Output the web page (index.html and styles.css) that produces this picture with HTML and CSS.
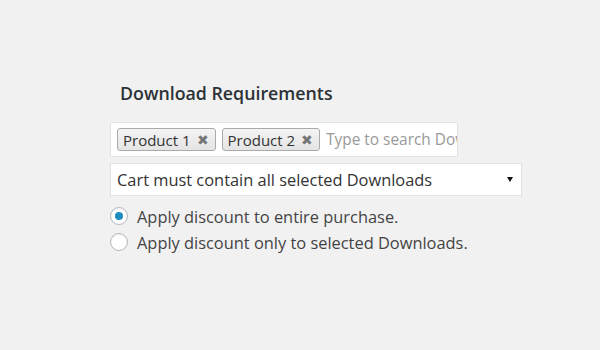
FILE: index.html
```html
<!DOCTYPE html>
<html lang="en">
<head>
  <meta charset="UTF-8" />
  <title>Download Requirements</title>
  <link rel="stylesheet" href="styles.css">
</head>
<body>
  <main class="panel">
    <h2 class="title">Download Requirements</h2>

    <div class="chosen">
      <span class="tag">Product 1 <span class="tag-x">&#x2716;</span></span>
      <span class="tag">Product 2 <span class="tag-x">&#x2716;</span></span>
      <span class="search">Type to search Dow</span>
    </div>

    <div class="select">
      <span>Cart must contain all selected Downloads</span>
      <span class="arrow"></span>
    </div>

    <div class="options">
      <label class="option">
        <span class="radio checked"></span>
        Apply discount to entire purchase.
      </label>
      <label class="option">
        <span class="radio"></span>
        Apply discount only to selected Downloads.
      </label>
    </div>
  </main>
</body>
</html>
```

FILE: styles.css
```css
body {
  margin: 0;
  background-color: #f1f1f1;
  font-family: 'Open Sans', sans-serif;
  color: #333;
}

.panel {
  display: flex;
  flex-direction: column;
  align-items: flex-start;
  padding: 81px 0 0 110px;
}

.title {
  margin: 0 0 17px;
  padding-left: 10px;
  font-size: 17.8px;
  font-weight: 600;
  line-height: 24px;
  color: #2c3136;
}

.chosen {
  box-sizing: border-box;
  width: 348px;
  height: 35px;
  display: flex;
  align-items: center;
  gap: 6px;
  padding: 0 6px;
  background-color: #fff;
  border: 1px solid #e2e2e2;
  border-radius: 2px;
  overflow: hidden;
  white-space: nowrap;
}

.tag {
  box-sizing: border-box;
  height: 23px;
  display: flex;
  align-items: center;
  gap: 6px;
  padding: 0 6px 0 5px;
  font-size: 15px;
  color: #333;
  background: linear-gradient(#f4f4f4, #e4e4e4);
  border: 1px solid #aaa;
  border-radius: 3px;
}

.tag-x {
  font-size: 14px;
  color: #777;
}

.search {
  font-size: 15.4px;
  color: #999;
}

.select {
  box-sizing: border-box;
  width: 412px;
  height: 33px;
  margin-top: 6px;
  display: flex;
  align-items: center;
  justify-content: space-between;
  padding: 0 6px;
  font-size: 16.4px;
  background-color: #fff;
  border: 1px solid #e2e2e2;
  color: #333;
}

.arrow {
  width: 0;
  height: 0;
  margin-right: 2px;
  border-left: 3px solid transparent;
  border-right: 3px solid transparent;
  border-top: 5px solid #111;
}

.options {
  margin-top: 7px;
  display: flex;
  flex-direction: column;
}

.option {
  height: 26px;
  display: flex;
  align-items: center;
  gap: 9px;
  font-size: 16.4px;
  color: #444;
}

.radio {
  box-sizing: border-box;
  width: 18px;
  height: 18px;
  display: flex;
  align-items: center;
  justify-content: center;
  border: 1px solid #b4b9be;
  border-radius: 50%;
  background-color: #fff;
  box-shadow: inset 0 1px 2px rgba(0, 0, 0, 0.07);
}

.radio.checked::before {
  content: '';
  width: 8px;
  height: 8px;
  border-radius: 50%;
  background-color: #1e8cbe;
}
```
